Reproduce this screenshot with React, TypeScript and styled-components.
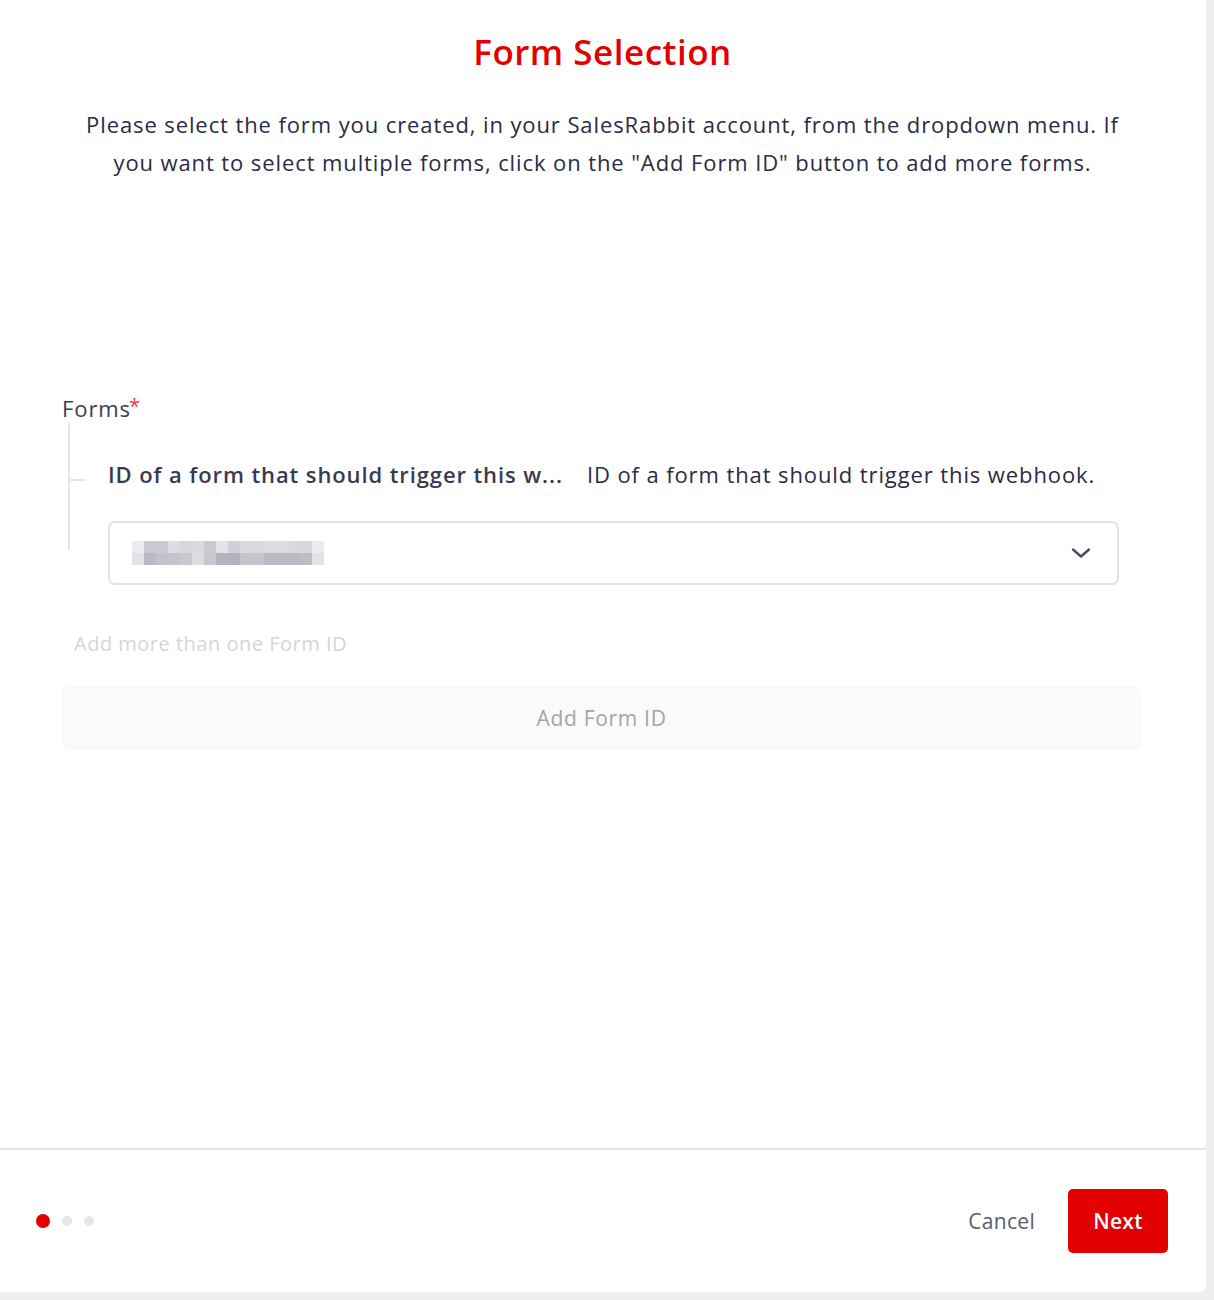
import React from "react";
import styled, { createGlobalStyle } from "styled-components";

const GlobalStyle = createGlobalStyle`
  html, body {
    margin: 0;
    padding: 0;
    background: #efeff0;
  }
  body {
    font-family: "Open Sans", Lato, sans-serif;
    color: #2b2b45;
    letter-spacing: 0.9px;
  }
  * { box-sizing: border-box; }
`;

const blurCells = [
  ["#ececf0", "#c9c9d1", "#c9c9d1", "#dcdce2", "#d6d6dc", "#d9d9de", "#c9c9d1", "#e4e4e8", "#d0d0d8", "#dadade", "#d8d8de", "#dcdce2", "#dcdce2", "#d8d8de", "#d6d6dc", "#ececf0"],
  ["#e4e4e8", "#b9b9c4", "#c2c2cb", "#c4c4cc", "#c8c8d0", "#dcdce2", "#c6c6ce", "#b4b4c0", "#b2b2be", "#c4c4cc", "#c4c4cc", "#babac4", "#babac4", "#babac4", "#bdbdc6", "#e4e4e8"],
];

const App = () => {
  return (
    <>
      <GlobalStyle />
      <Page>
        <Card>
          <Content>
            <Title>Form Selection</Title>
            <Description>
              Please select the form you created, in your SalesRabbit account, from the dropdown menu. If
              <br />
              you want to select multiple forms, click on the "Add Form ID" button to add more forms.
            </Description>

            <FieldGroup>
              <GroupLabel>
                Forms<Required>*</Required>
              </GroupLabel>
              <Nested>
                <FieldHeader>
                  <FieldName>ID of a form that should trigger this w...</FieldName>
                  <FieldHint>ID of a form that should trigger this webhook.</FieldHint>
                </FieldHeader>
                <Select>
                  <Blurred>
                    {blurCells.map((row, r) => (
                      <BlurRow key={r}>
                        {row.map((c, i) => (
                          <BlurCell key={i} style={{ background: c }} />
                        ))}
                      </BlurRow>
                    ))}
                  </Blurred>
                  <svg width="24" height="24" viewBox="0 0 24 24" fill="none" stroke="#4a4a60" strokeWidth="2.4" strokeLinecap="round" strokeLinejoin="round">
                    <path d="M4 8.5l8 7 8-7" />
                  </svg>
                </Select>
              </Nested>
            </FieldGroup>

            <MoreHint>Add more than one Form ID</MoreHint>
            <AddButton>Add Form ID</AddButton>
          </Content>

          <Footer>
            <Dots>
              <Dot active />
              <Dot />
              <Dot />
            </Dots>
            <Actions>
              <CancelButton>Cancel</CancelButton>
              <NextButton>Next</NextButton>
            </Actions>
          </Footer>
        </Card>
      </Page>
    </>
  );
};

export default App;

const Page = styled.div`
  width: 1214px;
  height: 1300px;
  background: #efeff0;
`;

const Card = styled.div`
  width: 1206px;
  height: 1292px;
  background: #ffffff;
  border-bottom-right-radius: 6px;
  display: flex;
  flex-direction: column;
`;

const Content = styled.div`
  flex: 1;
  padding: 28px 65px 0 62px;
  display: flex;
  flex-direction: column;
`;

const Title = styled.h1`
  margin: 0;
  text-align: center;
  color: #e30000;
  font-size: 35px;
  font-weight: 600;
  line-height: 48px;
  letter-spacing: 0.5px;
  padding-left: 2px;
`;

const Description = styled.p`
  margin: 29px 0 0;
  text-align: center;
  font-size: 22px;
  line-height: 38px;
  color: #2b2b45;
  white-space: nowrap;
  padding-left: 2px;
`;

const FieldGroup = styled.div`
  margin-top: 212px;
  display: flex;
  flex-direction: column;
`;

const GroupLabel = styled.div`
  font-size: 22px;
  line-height: 30px;
  color: #3c3c52;
`;

const Required = styled.span`
  color: #e03a3a;
  font-size: 20px;
  vertical-align: top;
  position: relative;
  top: -2px;
  margin-left: -2px;
`;

const Nested = styled.div`
  position: relative;
  margin-left: 6px;
  padding: 36px 22px 0 40px;
  &::before {
    content: "";
    position: absolute;
    left: 0;
    top: 0;
    height: 127px;
    border-left: 2px solid #e6e6ea;
  }
  &::after {
    content: "";
    position: absolute;
    left: 0;
    top: 56px;
    width: 18px;
    border-top: 2px solid #e6e6ea;
  }
`;

const FieldHeader = styled.div`
  display: flex;
  align-items: baseline;
  gap: 24px;
  font-size: 22px;
  line-height: 30px;
`;

const FieldName = styled.span`
  font-weight: 600;
  color: #3a3a50;
`;

const FieldHint = styled.span`
  color: #2b2b45;
`;

const Select = styled.div`
  margin-top: 32px;
  height: 64px;
  border: 2px solid #e2e2e8;
  border-radius: 7px;
  display: flex;
  align-items: center;
  justify-content: space-between;
  padding: 0 24px 0 22px;
`;

const Blurred = styled.div`
  display: flex;
  flex-direction: column;
`;

const BlurRow = styled.div`
  display: flex;
`;

const BlurCell = styled.span`
  width: 12px;
  height: 12px;
`;

const MoreHint = styled.div`
  margin-top: 45px;
  margin-left: 12px;
  font-size: 20px;
  line-height: 28px;
  letter-spacing: 0.5px;
  color: #d2d6de;
`;

const AddButton = styled.button`
  margin-top: 28px;
  height: 64px;
  width: 1079px;
  border: none;
  border-radius: 6px;
  background: #fafafa;
  color: #a3a3ad;
  font-family: inherit;
  font-size: 21px;
  letter-spacing: 0.7px;
`;

const Footer = styled.div`
  height: 144px;
  border-top: 2px solid #e6e6ea;
  display: flex;
  align-items: center;
  justify-content: space-between;
  padding: 0 38px 0 36px;
`;

const Dots = styled.div`
  display: flex;
  align-items: center;
  gap: 12px;
`;

const Dot = styled.span<{ active?: boolean }>`
  width: ${(p) => (p.active ? 14 : 10)}px;
  height: ${(p) => (p.active ? 14 : 10)}px;
  border-radius: 50%;
  background: ${(p) => (p.active ? "#e30000" : "#e6e6ea")};
`;

const Actions = styled.div`
  display: flex;
  align-items: center;
  gap: 33px;
`;

const CancelButton = styled.button`
  border: none;
  background: none;
  padding: 0;
  font-family: inherit;
  font-size: 21px;
  letter-spacing: 0.3px;
  color: #5a5a6e;
`;

const NextButton = styled.button`
  width: 100px;
  height: 64px;
  border: none;
  border-radius: 5px;
  background: #e30000;
  color: #ffffff;
  font-family: inherit;
  font-size: 21px;
  font-weight: 600;
  letter-spacing: 0.3px;
`;
